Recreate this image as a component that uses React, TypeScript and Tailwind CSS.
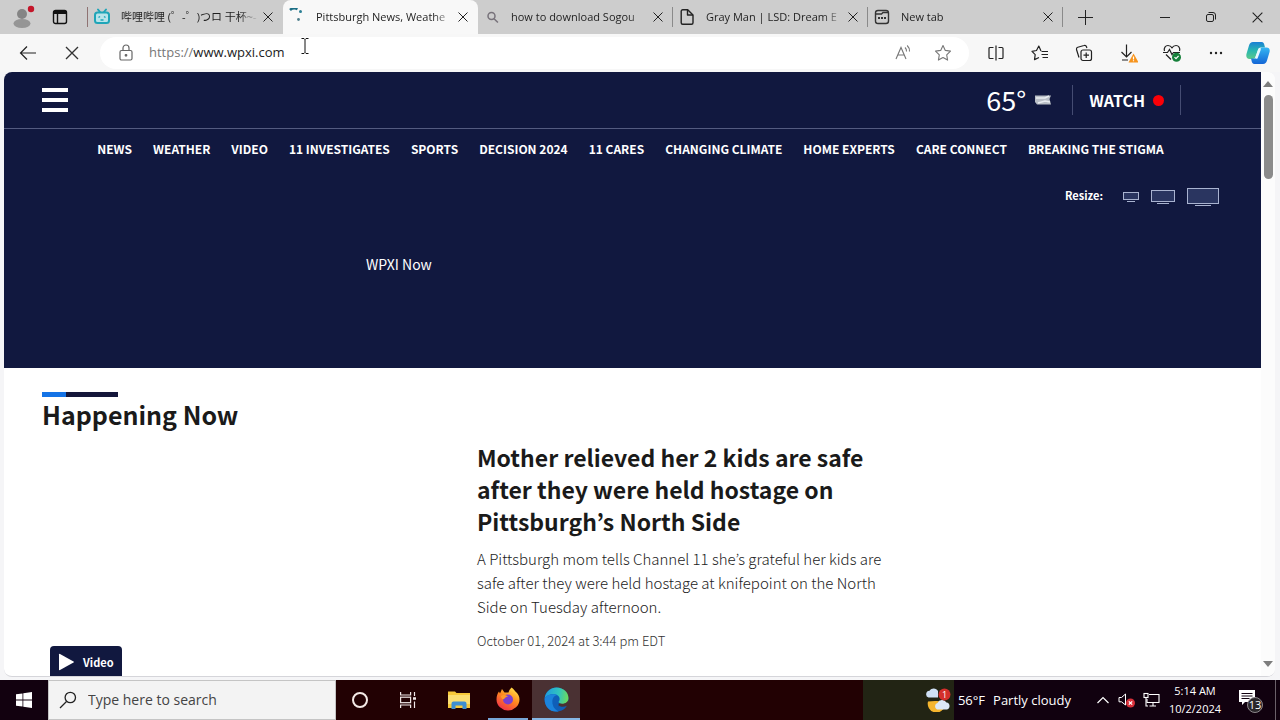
import type { ReactNode } from "react";
import clsx from "clsx";

const navLinks = [
  "NEWS",
  "WEATHER",
  "VIDEO",
  "11 INVESTIGATES",
  "SPORTS",
  "DECISION 2024",
  "11 CARES",
  "CHANGING CLIMATE",
  "HOME EXPERTS",
  "CARE CONNECT",
  "BREAKING THE STIGMA",
];

const BiliIcon = () => (
  <svg viewBox="0 0 18 18" className="size-[18px]" fill="none" stroke="#1fa5b8" strokeWidth="2">
    <path d="M5 1.5 7 4M13 1.5 11 4" strokeLinecap="round" />
    <rect x="2" y="4.5" width="14" height="10.5" rx="2.5" fill="#b9e4ea" />
    <path d="M5.5 9.5 7 8.5M12.5 9.5 11 8.5M7.5 12h3" strokeWidth="1.5" />
  </svg>
);

const SpinnerIcon = () => (
  <svg viewBox="0 0 18 18" className="size-[18px]" fill="none">
    <path d="M2 2A7 7 0 0 1 9.5 1" stroke="#1c6f86" strokeWidth="2.6" />
    <circle cx="12.5" cy="3.5" r="1.5" fill="#2b7f94" />
    <circle cx="10.5" cy="11.5" r="1.4" fill="#4f7f8c" />
  </svg>
);

const SearchTabIcon = () => (
  <svg viewBox="0 0 18 18" className="size-[18px]" fill="none" stroke="#77727a" strokeWidth="1.5">
    <circle cx="8.5" cy="8" r="3.5" />
    <path d="m11.1 10.700 3.8 3.8" />
  </svg>
);

const PageIcon = () => (
  <svg viewBox="0 0 18 18" className="size-[18px]" fill="none" stroke="#222" strokeWidth="1.4" strokeLinejoin="round">
    <path d="M3.2 3.2a1.5 1.5 0 0 1 1.5-1.5h5L15 7v7.8a1.5 1.5 0 0 1-1.5 1.5H4.7a1.5 1.5 0 0 1-1.5-1.5z" />
    <path d="M9.5 1.8V7H15" />
  </svg>
);

const NewTabIcon = () => (
  <svg viewBox="0 0 18 18" className="size-[18px]" fill="none" stroke="#333" strokeWidth="1.4">
    <rect x="2.5" y="2.5" width="13" height="13" rx="2.5" />
    <path d="M2.5 6h6L10 4.5h5.5" />
    <path d="M5 10h2M8 10h2M11 10h2" strokeWidth="1.8" />
  </svg>
);

const tabs = [
  { title: "哔哩哔哩 (゜-゜)つロ 干杯~-", icon: <BiliIcon /> },
  { title: "Pittsburgh News, Weathe", icon: <SpinnerIcon />, active: true },
  { title: "how to download Sogou", icon: <SearchTabIcon />, divider: true },
  { title: "Gray Man | LSD: Dream E", icon: <PageIcon />, divider: true },
  { title: "New tab", icon: <NewTabIcon />, divider: true },
];

const Cross = ({ className }: { className: string }) => (
  <svg viewBox="0 0 12 12" className={className} fill="none" stroke="currentColor">
    <path d="m1.5 1.5 9 9m0-9-9 9" />
  </svg>
);

const IconButton = ({ label, className, children }: { label: string; className?: string; children: ReactNode }) => (
  <button type="button" aria-label={label} className={clsx("flex shrink-0 items-center justify-center", className)}>
    {children}
  </button>
);

const TabStrip = () => (
  <div className="flex h-[34px] shrink-0 items-center bg-[#cdcdcd]">
    <IconButton label="Profile" className="w-11">
      <svg viewBox="0 0 26 24" className="h-6 w-[26px]">
        <circle cx="13" cy="9" r="5" fill="#858585" />
        <ellipse cx="13" cy="18.5" rx="8.5" ry="4.5" fill="#959595" />
        <circle cx="22" cy="4" r="3.2" fill="#c4162a" />
      </svg>
    </IconButton>
    <IconButton label="Tab actions" className="w-8">
      <svg viewBox="0 0 16 16" className="size-4" fill="none" stroke="#111" strokeWidth="1.4">
        <rect x="1.5" y="1.5" width="13" height="13" rx="2" />
        <path d="M1.5 3.5h13" strokeWidth="3" />
        <path d="M5.5 4v10" />
      </svg>
    </IconButton>
    <span className="ml-[11px] h-5 w-px bg-[#8f7373]" />
    {tabs.map((tab) => (
      <div
        key={tab.title}
        className={clsx("flex h-full w-[195px] min-w-0 items-center", tab.active && "rounded-t-lg bg-[#f8f8f8]")}
      >
        <span className="ml-[5px] shrink-0">{tab.icon}</span>
        <button
          type="button"
          className="ml-[10px] w-[138px] shrink-0 overflow-hidden text-left text-[11px] leading-5 whitespace-nowrap text-[#1f1f1f] [mask-image:linear-gradient(to_right,#000_85%,transparent)]"
        >
          {tab.title}
        </button>
        <IconButton label="Close tab" className="ml-px w-4 text-[#222]">
          <Cross className="size-3" />
        </IconButton>
        {tab.divider && <span className="ml-auto h-5 w-px bg-[#8a8a8a]" />}
      </div>
    ))}
    <IconButton label="New tab" className="w-11">
      <svg viewBox="0 0 15 15" className="size-[15px]" stroke="#222">
        <path d="M7.5 0v15M0 7.5h15" />
      </svg>
    </IconButton>
    <div className="ml-auto flex text-[#222]">
      <IconButton label="Minimize" className="w-[46px]">
        <svg viewBox="0 0 10 10" className="size-[10px]" stroke="currentColor">
          <path d="M0 5.5h10" />
        </svg>
      </IconButton>
      <IconButton label="Restore" className="w-[46px]">
        <svg viewBox="0 0 12 12" className="size-3" fill="none" stroke="currentColor">
          <rect x="1.5" y="3.5" width="7" height="7" rx="1.5" />
          <path d="M3.5 1.5H8A2.5 2.5 0 0 1 10.5 4v4.5" />
        </svg>
      </IconButton>
      <IconButton label="Close window" className="w-[46px]">
        <Cross className="size-[13px]" />
      </IconButton>
    </div>
  </div>
);

const CopilotIcon = () => (
  <svg viewBox="0 0 24 24" className="size-6">
    <defs>
      <linearGradient id="cop-a" x1="0" y1="0" x2="0" y2="1">
        <stop offset="0" stopColor="#1a7fd6" />
        <stop offset=".5" stopColor="#28b7b0" />
        <stop offset="1" stopColor="#5cc98a" />
      </linearGradient>
      <linearGradient id="cop-b" x1="0" y1="0" x2="0" y2="1">
        <stop offset="0" stopColor="#35b6f2" />
        <stop offset="1" stopColor="#1466d6" />
      </linearGradient>
    </defs>
    <path d="M7 1h8.500c2 0 2.500 1.500 3 3.500l.5 2h-4c-2 0-2.600 1-3.200 3L10 15c-.6 2-1.500 3-3.500 3H3.500C.8 18-.3 15.500.6 12.500L3 4.500C3.700 2.300 4.800 1 7 1z" fill="url(#cop-a)" />
    <path d="M17 23H8.500c-2 0-2.500-1.500-3-3.500L5 17.500h3.500c2 0 2.900-1 3.500-3L13.800 9c.6-2 1.500-2.500 3.200-2.500h3.500c2.700 0 3.800 2 2.900 5L21 19.500c-.7 2.200-1.800 3.500-4 3.500z" fill="url(#cop-b)" />
    <path d="m13.500 8.500-3 8" stroke="#e6f8ff" strokeWidth="2.5" strokeLinecap="round" />
  </svg>
);

const Toolbar = () => (
  <div className="flex h-[38px] shrink-0 items-center bg-[#f7f7f7] pr-[2px] pl-[6px]">
    <IconButton label="Back" className="w-11">
      <svg viewBox="0 0 18 16" className="h-4 w-[18px]" fill="none" stroke="#222" strokeWidth="1.2">
        <path d="M17 8H1.5M8 1.500 1.500 8 8 14.500" />
      </svg>
    </IconButton>
    <IconButton label="Stop" className="w-11 text-[#333]">
      <Cross className="size-4" />
    </IconButton>
    <div className="ml-[6px] flex h-8 flex-1 items-center rounded-full bg-white pl-[18px]">
      <svg viewBox="0 0 16 18" className="h-[18px] w-4" fill="none" stroke="#666" strokeWidth="1.2">
        <rect x="2" y="6.5" width="12" height="9.5" rx="1.5" />
        <path d="M5 6.5V4a3 3 0 0 1 6 0v2.5" />
        <circle cx="8" cy="11.3" r=".8" fill="#555" />
      </svg>
      <label htmlFor="address" className="ml-[15px] text-[13px] text-[#777]">
        https://
      </label>
      <input
        id="address"
        defaultValue="www.wpxi.com"
        className="min-w-0 flex-1 bg-transparent text-[13px] text-[#222] outline-none"
      />
      <IconButton label="Read aloud" className="w-10">
        <svg viewBox="0 0 18 18" className="size-[18px]" fill="none" stroke="#777" strokeWidth="1.1">
          <path d="M2 15 7 3.500 12 15M3.800 11h6.500M11 3.500a5 5 0 0 1 1.500 4M13.200 1.500A7.500 7.500 0 0 1 15.500 7.500" />
        </svg>
      </IconButton>
      <IconButton label="Favorite this page" className="mr-[6px] w-10">
        <svg viewBox="0 0 18 18" className="size-[18px]" fill="none" stroke="#777" strokeWidth="1.1" strokeLinejoin="round">
          <path d="m9 1.500 2.300 4.900 5.200.7-3.800 3.700.9 5.300L9 13.500l-4.600 2.600.9-5.300L1.500 7.100l5.200-.7z" />
        </svg>
      </IconButton>
    </div>
    <div className="ml-[5px] flex items-center">
      <IconButton label="Split screen" className="w-11">
        <svg viewBox="0 0 18 18" className="size-[18px]" fill="none" stroke="#222" strokeWidth="1.2">
          <path d="M6.500 3.500H3a1 1 0 0 0-1 1v9a1 1 0 0 0 1 1h3.500M9 1.500v15M11.500 3.500H15a1 1 0 0 1 1 1v9a1 1 0 0 1-1 1h-3.500" />
        </svg>
      </IconButton>
      <IconButton label="Favorites" className="w-11">
        <svg viewBox="0 0 18 18" className="size-[18px]" fill="none" stroke="#222" strokeWidth="1.2" strokeLinejoin="round">
          <path d="M10 7 7.800 2 5.500 6.500l-4.500.8 3.200 3.300-.7 5L8 13.500M10.500 7.500H17M10.500 10.500H17M11.500 13.500H17" />
        </svg>
      </IconButton>
      <IconButton label="Collections" className="w-11">
        <svg viewBox="0 0 18 18" className="size-[18px]" fill="none" stroke="#222" strokeWidth="1.2">
          <rect x="6" y="6" width="10.5" height="10.5" rx="2" />
          <path d="M11.200 8.500v5.500M8.500 11.200H14M4 13.500 1.500 5.500a2 2 0 0 1 1.300-2.300L9 1.500a2 2 0 0 1 2.500 1.300l.4 1.200" />
        </svg>
      </IconButton>
      <IconButton label="Downloads" className="w-11">
        <svg viewBox="0 0 20 20" className="size-5" fill="none" stroke="#222" strokeWidth="1.2">
          <path d="M8.500 1.500V14M3.500 9l5 5 5-5M4 17h6" />
          <path d="m15.500 10.500 5 9h-10z" fill="#f7941d" stroke="none" />
          <path d="M15.500 13.500v3m0 .7v1" stroke="#fff" />
        </svg>
      </IconButton>
      <IconButton label="Browser essentials" className="w-11">
        <svg viewBox="0 0 20 20" className="size-5" fill="none" stroke="#222" strokeWidth="1.2">
          <path d="M2.500 8C1.500 5 3.500 2.500 6 2.500c2 0 3.200 1 4 2.300.8-1.300 2-2.300 4-2.300 2.500 0 4.500 2.500 3.500 5.500M1 9.500h4.500l2-3 2.500 5 1.500-2H18M4 11.500l5 5" />
          <circle cx="14.5" cy="14.2" r="4.5" fill="#16803a" stroke="none" />
          <path d="m12.500 14.200 1.500 1.500 2.600-2.800" stroke="#fff" />
        </svg>
      </IconButton>
      <IconButton label="Settings and more" className="w-11">
        <svg viewBox="0 0 16 4" className="h-1 w-4" fill="#222">
          <circle cx="3" cy="2" r="1.2" />
          <circle cx="8" cy="2" r="1.2" />
          <circle cx="13" cy="2" r="1.2" />
        </svg>
      </IconButton>
      <IconButton label="Copilot" className="w-10">
        <CopilotIcon />
      </IconButton>
    </div>
  </div>
);

const screenSizes = [
  { label: "Small player", className: "h-2 w-4", stand: "w-2" },
  { label: "Medium player", className: "h-3 w-6", stand: "w-3" },
  { label: "Large player", className: "h-4 w-8", stand: "w-4" },
];

const SiteHeader = () => (
  <header className="bg-[#11183f] text-white">
    <div className="flex h-[57px] items-center border-b border-[#545b80] pr-20 pl-[38px]">
      <button type="button" aria-label="Open menu" className="flex w-[26px] flex-col gap-[6px]">
        <span className="h-1 bg-white" />
        <span className="h-1 bg-white" />
        <span className="h-1 bg-white" />
      </button>
      <span className="ml-auto text-[27px] leading-8">65°</span>
      <svg viewBox="0 0 18 12" className="mr-5 ml-2 h-3 w-[18px]">
        <path d="M1 1.500h16L15.500 5l1.500 5.500H3L1 8z" fill="#b9bec6" />
        <path d="M2 4h9l4-2M4 9l7-2 5 1" stroke="#e9edf1" strokeWidth="1.5" fill="none" />
      </svg>
      <button
        type="button"
        className="flex h-[30px] items-center gap-2 border-x border-[#454c72] px-4 text-base leading-6 font-bold"
      >
        WATCH
        <span className="size-[11px] rounded-full bg-[#fb0007]" />
      </button>
    </div>
    <nav className="flex justify-center gap-[21px] pt-[10px] pr-7 pl-6">
      {navLinks.map((item) => (
        <a key={item} href="#" className="text-xs leading-5 font-bold whitespace-nowrap">
          {item}
        </a>
      ))}
    </nav>
    <div className="flex h-[209px] flex-col px-[42px] pt-[25px]">
      <div className="flex items-center justify-end">
        <span className="mr-2 text-[11px] leading-5 font-bold">Resize:</span>
        <div className="flex items-center pt-1">
          {screenSizes.map((size) => (
            <button key={size.label} type="button" aria-label={size.label} className="ml-3 flex flex-col items-center gap-px">
              <span className={clsx("border border-[#a9b3d0] bg-[#2a3560]", size.className)} />
              <span className={clsx("h-px bg-[#a9b3d0]", size.stand)} />
            </button>
          ))}
        </div>
      </div>
      <p className="mt-[46px] pl-80 text-sm leading-6">WPXI Now</p>
    </div>
  </header>
);

const HappeningNow = () => (
  <main className="px-[38px] pt-6">
    <div className="flex h-[5px] w-[76px] bg-[#14163a]">
      <span className="w-6 bg-[#1473e6]" />
    </div>
    <h2 className="text-[25px] leading-[34px] font-bold text-[#1a1a1a]">Happening Now</h2>
    <div className="mt-[10px] grid grid-cols-[411px_411px_1fr] gap-6">
      <div className="relative mt-[6px] aspect-video">
        <button
          type="button"
          className="absolute bottom-0 left-2 flex h-8 items-center rounded-t bg-[#11183f] px-2 text-[11px] font-bold text-white"
        >
          <svg viewBox="0 0 16 18" className="mr-[9px] h-[18px] w-4" fill="#fff">
            <path d="M1 1.500v15a.7.7 0 0 0 1 .6l13.500-7.500a.7.7 0 0 0 0-1.200L2 .9a.7.7 0 0 0-1 .6z" />
          </svg>
          Video
        </button>
      </div>
      <article>
        <h3 className="text-[23px] leading-8 font-bold text-[#1a1a1a]">
          <a href="#">Mother relieved her 2 kids are safe after they were held hostage on Pittsburgh’s North Side</a>
        </h3>
        <p className="mt-[10px] text-[15px] leading-6 font-light text-[#222]">
          A Pittsburgh mom tells Channel 11 she’s grateful her kids are safe after they were held hostage at knifepoint
          on the North Side on Tuesday afternoon.
        </p>
        <p className="mt-3 text-[13px] leading-5 font-light text-[#333]">October 01, 2024 at 3:44 pm EDT</p>
      </article>
    </div>
  </main>
);

const Scrollbar = () => (
  <div className="flex w-[14px] shrink-0 flex-col items-center bg-[#fcfcfc] py-[9px]">
    <svg viewBox="0 0 10 6" className="h-[6px] w-[10px]" fill="#7d7d7d">
      <path d="M5 0l5 6H0z" />
    </svg>
    <span className="mt-2 h-[84px] w-[9px] rounded-full bg-[#8b8b8b]" />
    <svg viewBox="0 0 10 6" className="mt-auto h-[6px] w-[10px]" fill="#7d7d7d">
      <path d="M0 0h10L5 6z" />
    </svg>
  </div>
);

const FirefoxIcon = () => (
  <svg viewBox="0 0 24 24" className="size-6">
    <defs>
      <linearGradient id="ff" x1=".8" y1="0" x2=".2" y2="1">
        <stop offset="0" stopColor="#ffe44a" />
        <stop offset=".45" stopColor="#ff8a1f" />
        <stop offset="1" stopColor="#f0294e" />
      </linearGradient>
    </defs>
    <path d="M15.500.5c3 2 3.500 4 4.500 4.500 2 1.500 3.500 4.500 3.500 7.500A11.300 11.300 0 0 1 12 23.500 11.300 11.300 0 0 1 .5 12.500c0-3.500 1-6 2.500-8l1 2C5 4.500 5.500 3 6 2l2.500 3.500h4C13 3.500 14 2 15.500.5z" fill="url(#ff)" />
    <circle cx="12" cy="12.5" r="5" fill="#7a3fd0" />
    <path d="M5 9c2-1.500 5-1 7 .5-2 .2-2.500 1-4 2.500-1.500 1-3-1-3-3z" fill="#ff9a2a" />
  </svg>
);

const EdgeIcon = () => (
  <svg viewBox="0 0 24 24" className="size-[25px]">
    <defs>
      <linearGradient id="ed" x1="0" y1=".3" x2="1" y2=".4">
        <stop offset="0" stopColor="#1f9ae0" />
        <stop offset=".6" stopColor="#31c5bd" />
        <stop offset="1" stopColor="#6cdb5c" />
      </linearGradient>
    </defs>
    <circle cx="12" cy="12" r="11.5" fill="#0f5fb8" />
    <path d="M14 24V16l9.500-3V20z" fill="#4a3133" />
    <path d="M14 17.500c2 2 5.500 2 8 .5-2 3.500-5.500 5.500-9.500 5.500z" fill="#0f5fb8" />
    <path d="M.6 11C1.500 4.500 6.500.5 12 .5c7 0 11.500 5 11.500 10 0 3.500-3 5.500-6 5.500-2 0-3.500-.8-3.500-1.500s1-1.200 1-3C15 9 12.500 7 9 7 5 7 1.500 9 .6 11z" fill="url(#ed)" />
    <path d="M.6 11C2 8.500 5 7 9 7c1.500 0 3 .4 4 1-3 0-5 2.500-5 6 0 5 3 8.500 6 9.200C6.500 25 .5 19.500.6 11z" fill="#1b83dc" />
  </svg>
);

const Taskbar = () => (
  <footer className="flex h-10 shrink-0 items-stretch bg-[#220103] font-['Open_Sans',sans-serif] text-white">
    <IconButton label="Start" className="w-12 bg-[#12010f]">
      <svg viewBox="0 0 16 16" className="size-4" fill="#fff">
        <path d="M0 2.300 6.500 1.400v6.200H0zM7.300 1.300 16 0v7.600H7.300zM0 8.400h6.500v6.200L0 13.700zM7.300 8.400H16V16l-8.700-1.300z" />
      </svg>
    </IconButton>
    <label className="flex w-72 items-center border border-[#c4c4c4] bg-[#f3f3f3] pl-[10px]">
      <svg viewBox="0 0 18 18" className="size-[18px]" fill="none" stroke="#222" strokeWidth="1.3">
        <circle cx="11.3" cy="6.5" r="5.2" />
        <path d="M7.500 10.500 1 17" />
      </svg>
      <input
        type="text"
        aria-label="Search"
        placeholder="Type here to search"
        className="ml-[11px] min-w-0 flex-1 bg-transparent text-sm outline-none placeholder:text-[#444]"
      />
    </label>
    <IconButton label="Cortana" className="w-12">
      <span className="size-4 rounded-full border-2 border-[#f3e9e6]" />
    </IconButton>
    <IconButton label="Task view" className="w-12">
      <svg viewBox="0 0 16 16" className="size-4" fill="none" stroke="#f0e8e8" strokeWidth="1.2">
        <path d="M.6 0v3h10V0M.6 16v-3h10v3M14.500 0v4M14.500 9.500V16" />
        <rect x=".6" y="5.2" width="10" height="5.5" />
        <path d="M13 6.500h3" strokeWidth="2.5" />
      </svg>
    </IconButton>
    <IconButton label="File Explorer" className="ml-[2px] w-[49px]">
      <svg viewBox="0 0 22 20" className="h-5 w-[22px]">
        <path d="M0 1.500h7l1.500 1.500H22V18H0z" fill="#f7c93a" />
        <path d="M0 5h22v9H0z" fill="#fbdf72" />
        <path d="M3.500 19v-5.500a2 2 0 0 1 2-2h11a2 2 0 0 1 2 2V19h-4v-3.500h-7V19z" fill="#3f8fd0" />
      </svg>
    </IconButton>
    <div className="flex w-[49px] justify-center">
      <IconButton label="Firefox" className="w-10 border-b-2 border-[#78a6d6]">
        <FirefoxIcon />
      </IconButton>
    </div>
    <IconButton label="Microsoft Edge" className="w-12 border-b-2 border-[#86b8e6] bg-[#4a3133]">
      <EdgeIcon />
    </IconButton>
    <div className="ml-auto flex">
      <div className="flex w-[91px] items-center justify-end bg-[#222414] pr-[2px]">
        <svg viewBox="0 0 28 24" className="h-6 w-7">
          <path d="M4 13.500A8 8 0 0 0 21 18 10 10 0 0 0 11 13z" fill="#f5b52e" />
          <path d="M4.500 9.500a3.500 3.500 0 0 1 1-6.800A5 5 0 0 1 14 3v6.500z" fill="#cfe0f5" />
          <path d="M13 21.500a3.500 3.500 0 0 1 .5-6.500 5 5 0 0 1 9-.5 3.600 3.600 0 0 1 .5 7z" fill="#dde8f6" />
          <circle cx="20.5" cy="6.5" r="6" fill="#d32f2b" />
          <text x="20.5" y="10" fontSize="9" textAnchor="middle" fill="#fff">1</text>
        </svg>
      </div>
      <div className="flex items-center bg-[#11010f] pl-1">
        <button type="button" className="flex gap-2 text-[13px] leading-5 whitespace-nowrap">
          <span>56°F</span>
          <span>Partly cloudy</span>
        </button>
        <IconButton label="Show hidden icons" className="ml-5 w-6">
          <svg viewBox="0 0 12 8" className="h-2 w-3" fill="none" stroke="#fff" strokeWidth="1.2">
            <path d="M.5 7 6 1.500 11.500 7" />
          </svg>
        </IconButton>
        <IconButton label="Volume muted" className="w-6">
          <svg viewBox="0 0 18 16" className="h-4 w-[18px]">
            <path d="M1 5.500h2.500L7.500 2v11L3.500 9.800H1z" fill="none" stroke="#fff" />
            <circle cx="12.5" cy="11" r="4.5" fill="#d8303a" />
            <path d="m10.800 9.300 3.400 3.400m0-3.400-3.400 3.400" stroke="#fff" strokeWidth="1.2" />
          </svg>
        </IconButton>
        <IconButton label="Network" className="w-6">
          <svg viewBox="0 0 17 16" className="h-4 w-[17px]" fill="none" stroke="#fff" strokeWidth="1.1">
            <path d="M6 2.500h10v8H4V7M10 10.500V14M6.500 14H13" />
            <rect x="1" y="1.5" width="4" height="4" />
            <path d="M3 5.500V14h2" />
          </svg>
        </IconButton>
        <button type="button" className="ml-[2px] w-[60px] text-[11px] leading-[18px]">
          <span className="block">5:14 AM</span>
          <span className="block">10/2/2024</span>
        </button>
        <IconButton label="Notifications" className="ml-[6px] w-10">
          <svg viewBox="0 0 28 26" className="h-[26px] w-7">
            <path d="M2 3h16v12H8l-3 3v-3H2z" fill="#fff" />
            <path d="M4.500 6.500h11M4.500 9h11M4.500 11.500h8" stroke="#11010f" />
            <circle cx="18" cy="18" r="7.500" fill="#2a262a" stroke="#8d888c" />
            <text x="18" y="22" fontSize="11" textAnchor="middle" fill="#fff">13</text>
          </svg>
        </IconButton>
        <button type="button" aria-label="Show desktop" className="ml-1 h-full w-[5px] border-l border-[#6b6069]" />
      </div>
    </div>
  </footer>
);

const App = () => {
  return (
    <div className="relative flex h-screen flex-col overflow-hidden bg-[#f5f5f7] font-['Open_Sans','Noto_Sans_CJK_SC',sans-serif]">
      <TabStrip />
      <Toolbar />
      <div className="mr-[5px] mb-[3px] ml-1 flex min-h-0 flex-1 overflow-hidden rounded-lg border-b border-[#d5d5da] bg-white">
        <div className="min-w-0 flex-1 overflow-hidden font-['Noto_Sans_CJK_KR',sans-serif]">
          <SiteHeader />
          <HappeningNow />
        </div>
        <Scrollbar />
      </div>
      <Taskbar />
      {/* text cursor over the address bar */}
      <svg viewBox="0 0 8 16" className="absolute top-[38px] left-[301px] h-4 w-2" fill="none" stroke="#111">
        <path d="M.5 .5H3l1 1 1-1h2.500M4 1.500v13M.5 15.500H3l1-1 1 1h2.500" />
      </svg>
    </div>
  );
};

export default App;
